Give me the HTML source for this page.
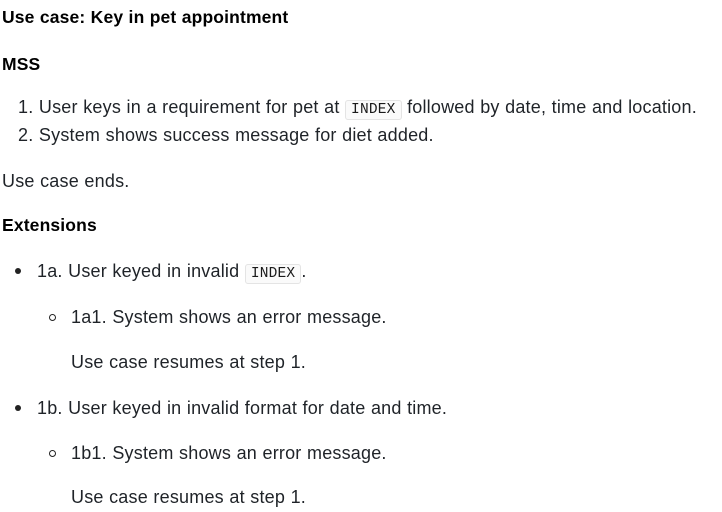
<!DOCTYPE html>
<html><head><style>
body{margin:0;width:722px;height:512px;background:#fff;color:#1f2328;font-family:"Liberation Sans",sans-serif;font-size:18px;letter-spacing:0.2px;word-spacing:0.3px;position:relative;overflow:hidden}
.l{position:absolute;white-space:nowrap;line-height:20px;height:20px}
b{font-weight:bold;color:#000;font-size:17.5px;letter-spacing:0.15px}
code{font-family:"Liberation Mono",monospace;font-size:14.5px;letter-spacing:0.2px;background:#fafafa;border:1px solid #e4e4e4;border-radius:3px;padding:1px 5px;color:#1a1a1a}
.dot{position:absolute;width:6px;height:6px;border-radius:50%;background:#222}
.circ{position:absolute;width:5px;height:5px;border-radius:50%;border:1.2px solid #222}
</style></head><body>
<div class="l" style="left:2px;top:7px"><b>Use case: Key in pet appointment</b></div>
<div class="l" style="left:2px;top:54px"><b>MSS</b></div>
<div class="l" style="left:18px;top:97px">1. User keys in a requirement for pet at <code>INDEX</code> followed by date, time and location.</div>
<div class="l" style="left:18px;top:125px">2. System shows success message for diet added.</div>
<div class="l" style="left:2px;top:171px">Use case ends.</div>
<div class="l" style="left:2px;top:215px"><b>Extensions</b></div>
<div class="dot" style="left:15px;top:268px"></div>
<div class="l" style="left:37px;top:261px">1a. User keyed in invalid <code>INDEX</code>.</div>
<div class="circ" style="left:49px;top:314px"></div>
<div class="l" style="left:71px;top:307px">1a1. System shows an error message.</div>
<div class="l" style="left:71px;top:352px">Use case resumes at step 1.</div>
<div class="dot" style="left:15px;top:405px"></div>
<div class="l" style="left:37px;top:398px">1b. User keyed in invalid format for date and time.</div>
<div class="circ" style="left:49px;top:450px"></div>
<div class="l" style="left:71px;top:443px">1b1. System shows an error message.</div>
<div class="l" style="left:71px;top:487px">Use case resumes at step 1.</div>
</body></html>
